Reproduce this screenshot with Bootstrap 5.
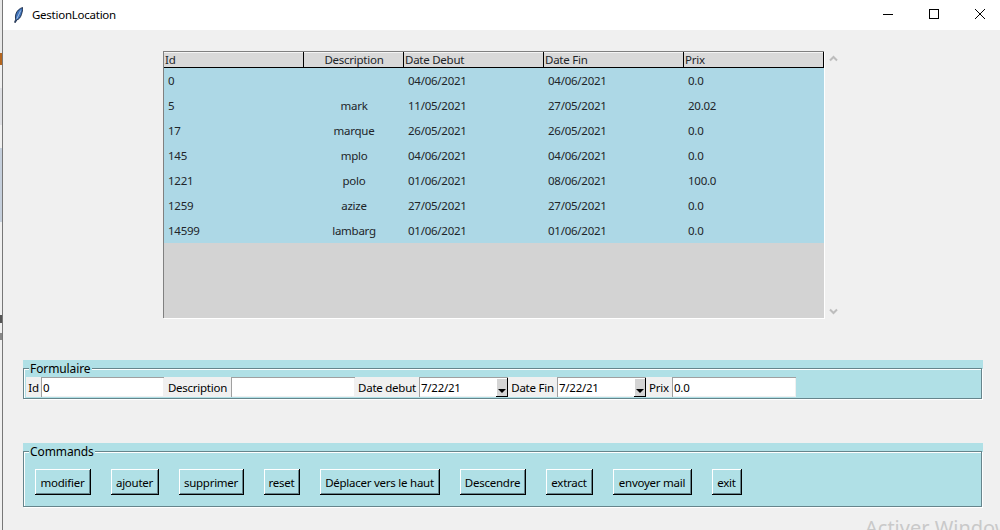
<!DOCTYPE html>
<html lang="fr">
<head>
<meta charset="utf-8">
<title>GestionLocation</title>
<link href="https://cdn.jsdelivr.net/npm/bootstrap@5.3.0/dist/css/bootstrap.min.css" rel="stylesheet">
<style>
html,body{height:530px;overflow:hidden}
body{background:#f0f0f0;font-family:"Noto Sans","Open Sans",sans-serif;font-size:11.5px;letter-spacing:-.25px;line-height:16px;color:#000}
.desk-sliver{width:2px;height:530px;flex:none;background:linear-gradient(to bottom,#e8e8e8 0 53px,#b5651d 53px 65px,#f0f0f0 65px 88px,#dfe0e4 88px 125px,#f0f0f0 125px 148px,#c5cfdc 148px 222px,#f0f0f0 222px 315px,#555 315px 323px,#f0f0f0 323px 333px,#888 333px 340px,#f0f0f0 340px)}
.app-win{width:998px;height:530px;flex:none;border-left:1px solid #777;position:relative;overflow:hidden}
.title-bar{height:30px;background:#fff;margin-right:-3px}
.title-ico{margin-left:11px;margin-right:9px}
.win-btn{width:46px;height:30px}
.win-btn svg{margin-bottom:2px}
.tree-wrap{margin:21px 0 0 160px;height:268px}
.tree-box{width:661px;height:267px;background:#d3d3d3;border-left:1px solid #808080;border-top:1px solid #808080;box-shadow:1px 1px 0 #fff}
.tree-tbl{table-layout:fixed;width:660px;border-collapse:separate;border-spacing:0;margin:0;--bs-table-bg:transparent}
.tree-tbl>thead>tr>th{height:16px;padding:0 0 0 1px;background:#d9d9d9;font-weight:400;border:0;border-bottom:1px solid #000;border-right:1px solid #000;box-shadow:inset 0 1px 0 #f4f4f4;line-height:15px;white-space:nowrap}
.tree-tbl>tbody>tr>td{height:25px;padding:0 0 0 4px;background:#add8e6;border:0;vertical-align:top;white-space:nowrap;line-height:25px}
.tree-tbl .cen{text-align:center;padding-left:0}
.scroll-col{width:20px;margin-left:-1px;height:268px}
.band{background:#b0e0e6;margin-left:20px;width:960px;padding-top:1px}
.band-form{margin-top:41px;height:39px}
.band-cmd{margin-top:44px;height:64px}
.frame{margin:0;padding:0;height:100%;width:959px;border:1px solid #66858c;box-shadow:inset 1px 1px 0 #fff,1px 1px 0 #fff;min-width:0}
.frame>legend{float:none;width:auto;margin:-1px 0 0 5px;padding:0 1px;font-size:12px;letter-spacing:-.1px;line-height:16px;height:14px;background:#b0e0e6}
.form-row{margin:2px 0 0 2px;height:20px}
.lbl{background:#f0f0f0;height:20px;line-height:21px;text-align:center;flex:none}
.ent{background:#fff;height:20px;line-height:20px;flex:none;border-left:1px solid #a0a0a0;border-top:1px solid #a0a0a0;padding-left:1px;box-shadow:inset -1px -1px 0 #f0f0f0}
.date-ent{display:flex;justify-content:space-between}
.drop{width:12px;height:19px;background:#d4d4d4;border-right:1px solid #000;border-bottom:1px solid #000;box-shadow:inset 1px 1px 0 #fff;display:flex;align-items:flex-end;justify-content:center;padding-bottom:3px;flex:none}
.drop i{display:block;width:0;height:0;border-left:4px solid transparent;border-right:4px solid transparent;border-top:4px solid #000}
.cmd-row{margin:11px 0 0 11px;height:26px}
.tk-btn{background:#b0e0e6;border:0;border-radius:0;padding:2px 0 0;height:26px;font-size:11.5px;letter-spacing:-.25px;line-height:24px;color:#000;border-right:1px solid #000;border-bottom:1px solid #000;box-shadow:inset 1px 1px 0 #fff,inset -1px -1px 0 #66858c;text-align:center;flex:none}
.watermark{position:absolute;left:862px;top:516px;font-size:20px;letter-spacing:0;line-height:24px;color:#c9c9c9;white-space:nowrap}
</style>
</head>
<body>
<div class="d-flex">
<div class="desk-sliver"></div>
<div class="app-win">
  <div class="title-bar d-flex align-items-center">
    <svg class="title-ico" width="9" height="16" viewBox="0 0 9 16"><path d="M8.600.5C5.600 1.300 2.800 3.800 1.800 7.200 1.300 9.200 1.300 10.800 1.700 12.200L.6 15.300l.8.300L2.700 13c2.200-.5 3.800-2.600 4.700-5.300C8.200 5.200 8.800 2.800 8.600.5z" fill="#3f73ba" stroke="#0a1730" stroke-width=".8"/><path d="M6.700 3.500 2.800 11.800" stroke="#d5e4f7" stroke-width=".7" fill="none"/></svg>
    <span>GestionLocation</span>
    <div class="ms-auto d-flex">
      <div class="win-btn d-flex align-items-center justify-content-center"><svg width="10" height="10" viewBox="0 0 10 10"><path d="M0 5.500h10" stroke="#000"/></svg></div>
      <div class="win-btn d-flex align-items-center justify-content-center"><svg width="10" height="10" viewBox="0 0 10 10"><rect x=".5" y=".5" width="9" height="9" fill="none" stroke="#000"/></svg></div>
      <div class="win-btn d-flex align-items-center justify-content-center"><svg width="10" height="10" viewBox="0 0 10 10"><path d="M0 0l10 10M10 0L0 10" stroke="#000"/></svg></div>
    </div>
  </div>

  <div class="tree-wrap d-flex">
    <div class="tree-box">
      <table class="table tree-tbl">
        <colgroup><col style="width:140px"><col style="width:100px"><col style="width:140px"><col style="width:140px"><col style="width:140px"></colgroup>
        <thead><tr><th>Id</th><th class="text-center">Description</th><th>Date Debut</th><th>Date Fin</th><th>Prix</th></tr></thead>
        <tbody>
          <tr><td>0</td><td class="cen"></td><td>04/06/2021</td><td>04/06/2021</td><td>0.0</td></tr>
          <tr><td>5</td><td class="cen">mark</td><td>11/05/2021</td><td>27/05/2021</td><td>20.02</td></tr>
          <tr><td>17</td><td class="cen">marque</td><td>26/05/2021</td><td>26/05/2021</td><td>0.0</td></tr>
          <tr><td>145</td><td class="cen">mplo</td><td>04/06/2021</td><td>04/06/2021</td><td>0.0</td></tr>
          <tr><td>1221</td><td class="cen">polo</td><td>01/06/2021</td><td>08/06/2021</td><td>100.0</td></tr>
          <tr><td>1259</td><td class="cen">azize</td><td>27/05/2021</td><td>27/05/2021</td><td>0.0</td></tr>
          <tr><td>14599</td><td class="cen">lambarg</td><td>01/06/2021</td><td>01/06/2021</td><td>0.0</td></tr>
        </tbody>
      </table>
    </div>
    <div class="scroll-col d-flex flex-column justify-content-between align-items-center">
      <svg class="mt-1" width="9" height="7" viewBox="0 0 9 7"><path d="M1 5.500l3.500-3.500 3.500 3.500" fill="none" stroke="#bdbdbd" stroke-width="2"/></svg>
      <svg class="mb-1" width="9" height="7" viewBox="0 0 9 7"><path d="M1 1.500l3.500 3.500 3.500-3.500" fill="none" stroke="#bdbdbd" stroke-width="2"/></svg>
    </div>
  </div>

  <div class="band band-form">
    <fieldset class="frame">
      <legend>Formulaire</legend>
      <div class="form-row d-flex">
        <div class="lbl" style="width:15px">Id</div>
        <div class="ent" style="width:123px">0</div>
        <div class="lbl" style="width:67px">Description</div>
        <div class="ent" style="width:124px"></div>
        <div class="lbl" style="width:64px">Date debut</div>
        <div class="ent date-ent" style="width:89px"><span>7/22/21</span><span class="drop"><i></i></span></div>
        <div class="lbl" style="width:49px">Date Fin</div>
        <div class="ent date-ent" style="width:89px"><span>7/22/21</span><span class="drop"><i></i></span></div>
        <div class="lbl" style="width:26px">Prix</div>
        <div class="ent" style="width:124px">0.0</div>
      </div>
    </fieldset>
  </div>

  <div class="band band-cmd">
    <fieldset class="frame">
      <legend>Commands</legend>
      <div class="cmd-row d-flex">
        <button class="btn tk-btn" style="width:56px;margin-right:20px">modifier</button>
        <button class="btn tk-btn" style="width:48px;margin-right:20px">ajouter</button>
        <button class="btn tk-btn" style="width:65px;margin-right:20px">supprimer</button>
        <button class="btn tk-btn" style="width:36px;margin-right:20px">reset</button>
        <button class="btn tk-btn" style="width:120px;margin-right:20px">Déplacer vers le haut</button>
        <button class="btn tk-btn" style="width:66px;margin-right:20px">Descendre</button>
        <button class="btn tk-btn" style="width:47px;margin-right:20px">extract</button>
        <button class="btn tk-btn" style="width:79px;margin-right:20px">envoyer mail</button>
        <button class="btn tk-btn" style="width:30px">exit</button>
      </div>
    </fieldset>
  </div>
  <div class="watermark">Activer Windows</div>
</div>
</div>
<script src="https://cdn.jsdelivr.net/npm/bootstrap@5.3.0/dist/js/bootstrap.bundle.min.js"></script>
</body>
</html>
